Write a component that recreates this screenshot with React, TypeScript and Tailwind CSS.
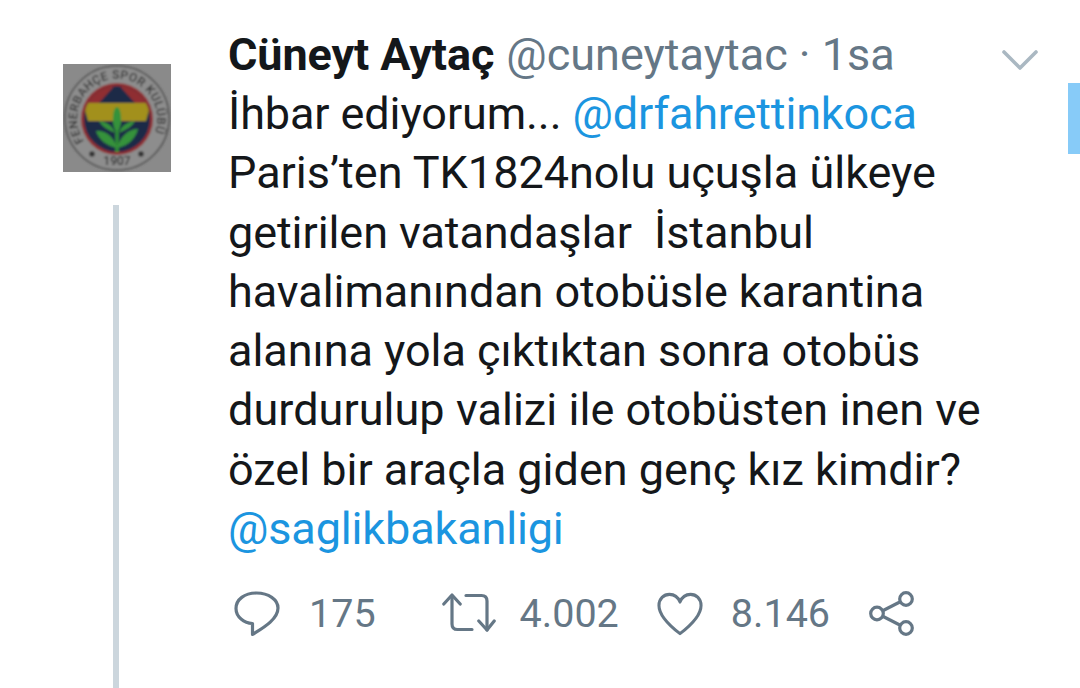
import React from 'react';

const Logo = () => (
  <svg viewBox="0 0 108 108" className="w-[108px] h-[108px] block">
    <defs>
      <filter id="soft" x="-5%" y="-5%" width="110%" height="110%">
        <feGaussianBlur stdDeviation="1" />
      </filter>
      <path id="ring" d="M 21 77 A 40 40 0 1 1 88 76" />
      <clipPath id="inner">
        <circle cx="54" cy="55" r="33" />
      </clipPath>
    </defs>
    <rect width="108" height="108" fill="#8a8a8a" />
    <g filter="url(#soft)">
      <circle cx="54" cy="54" r="52" fill="#8d8d8d" stroke="#505050" strokeWidth="1.6" />
      <circle cx="54" cy="55" r="36" fill="#8f2f33" />
      <g clipPath="url(#inner)">
        <rect x="18" y="18" width="72" height="74" fill="#1c2947" />
        <path d="M54 19 L20 19 L20 39 L36 39 Z" fill="#8f2f33" />
        <path d="M54 19 L88 19 L88 39 L72 39 Z" fill="#8f2f33" />
        <path d="M20 39 H88 L83 57 H25 Z" fill="#a2901c" />
      </g>
      <path d="M54 88 V48" stroke="#2f8a35" strokeWidth="3.6" />
      <ellipse cx="54" cy="55" rx="4.2" ry="12" fill="#35923a" />
      <path d="M54 84 C44 82 36 76 33 67 C43 66 51 73 54 84 Z" fill="#35923a" />
      <path d="M54 84 C64 82 72 76 75 65 C65 65 57 73 54 84 Z" fill="#35923a" />
      <path d="M52 69 C46 66 39 63 36 57 C44 58 50 62 52 69 Z" fill="#35923a" />
      <path d="M56 69 C62 66 69 63 72 57 C64 58 58 62 56 69 Z" fill="#35923a" />
      <text fontFamily="Roboto, sans-serif" fontSize="12" fontWeight="500" fill="#343434" letterSpacing="0.3">
        <textPath href="#ring" startOffset="0%">FENERBAHÇE SPOR KULÜBÜ</textPath>
      </text>
      <text x="54" y="101" textAnchor="middle" fontFamily="Roboto, sans-serif" fontSize="12" fontWeight="500" fill="#343434">1907</text>
      <circle cx="29" cy="90" r="2.8" fill="#333333" />
      <circle cx="78" cy="90" r="2.8" fill="#333333" />
    </g>
  </svg>
);

const Reply = () => (
  <svg viewBox="0 0 46 46" className="w-[46px] h-[46px]" fill="none" stroke="#657786" strokeWidth="3.2" strokeLinejoin="round">
    <path d="M22.5 2 C10.5 2 2 8.5 2 17.5 C2 26 10 32 18.5 32.5 L18.5 43.5 C27 38 44 29 44 17 C44 8.5 34.5 2 22.5 2 Z" />
  </svg>
);

const Retweet = () => (
  <svg viewBox="0 0 54 44" className="w-[54px] h-[44px]" fill="none" stroke="#657786" strokeWidth="3.2" strokeLinecap="round" strokeLinejoin="round">
    <path d="M1.8 12 L10 3 L18.2 12" />
    <path d="M10 4 V32 Q10 37.5 15.5 37.5 H30" />
    <path d="M24 3.5 H39.5 Q45 3.5 45 9 V38" />
    <path d="M36.8 29 L45 38 L52.2 29" />
  </svg>
);

const Heart = () => (
  <svg viewBox="0 0 48 46" className="w-[46px] h-[44px]" fill="none" stroke="#657786" strokeWidth="3.2" strokeLinejoin="round">
    <path d="M24 43.5 C13 35 2 25 2 14 C2 7 7 2.5 13 2.5 C18 2.5 22 5.5 24 10.5 C26 5.5 30 2.5 35 2.5 C41 2.5 46 7 46 14 C46 25 35 35 24 43.5 Z" />
  </svg>
);

const Share = () => (
  <svg viewBox="0 0 46 48" className="w-[46px] h-[48px]" fill="none" stroke="#657786" strokeWidth="3.2">
    <circle cx="8" cy="23.5" r="6.3" />
    <circle cx="37" cy="9" r="6.3" />
    <circle cx="37" cy="38" r="6.3" />
    <path d="M13.7 20.7 L31.3 11.8" />
    <path d="M13.7 26.3 L31.3 35.2" />
  </svg>
);

export default function App() {
  return (
    <div className="relative h-[688px] w-[1080px] overflow-hidden bg-white font-['Roboto',sans-serif] flex">
      <div className="w-[228px] shrink-0 pl-[63px] pt-[64px] flex flex-col">
        <Logo />
        <div className="mt-[33px] ml-[50px] w-[6px] flex-1 bg-[#ccd6dd]" />
      </div>

      <div className="w-[761px] shrink-0 pt-[25px]">
        <div className="flex items-baseline whitespace-nowrap text-[45px] leading-[59px]">
          <span className="font-bold text-[#14171a] tracking-[-0.1px]">Cüneyt Aytaç</span>
          <span className="ml-[12px] text-[#657786]">@cuneytaytac · 1sa</span>
        </div>
        <div className="text-[45px] leading-[59.3px] text-[#14171a] whitespace-nowrap">
          <div className="tracking-[-0.1px]">İhbar ediyorum... <span className="text-[#1b95e0] tracking-[-0.15px]">@drfahrettinkoca</span></div>
          <div>Paris’ten TK1824nolu uçuşla ülkeye</div>
          <div className="whitespace-pre tracking-[-0.08px]">getirilen vatandaşlar  İstanbul</div>
          <div className="tracking-[-0.06px]">havalimanından otobüsle karantina</div>
          <div className="tracking-[-0.04px]">alanına yola çıktıktan sonra otobüs</div>
          <div className="tracking-[0.04px]">durdurulup valizi ile otobüsten inen ve</div>
          <div>özel bir araçla giden genç kız kimdir?</div>
          <div className="text-[#1b95e0] tracking-[-0.15px]">@saglikbakanligi</div>
        </div>
        <div className="mt-[32px] flex items-center text-[39.5px] leading-[48px] text-[#657786]">
          <div className="ml-[6px]"><Reply /></div>
          <span className="ml-[29px]">175</span>
          <div className="ml-[66px]"><Retweet /></div>
          <span className="ml-[24px]">4.002</span>
          <div className="ml-[38px]"><Heart /></div>
          <span className="ml-[28px]">8.146</span>
          <div className="ml-[39px]"><Share /></div>
        </div>
      </div>

      <div className="flex-1 min-w-0 flex flex-col items-end">
        <svg viewBox="0 0 36 22" className="mt-[49px] mr-[42px] w-[36px] h-[22px]" fill="none" stroke="#aab8c2" strokeWidth="3.6" strokeLinecap="round" strokeLinejoin="round">
          <path d="M2 3 L18 19 L34 3" />
        </svg>
        <div className="mt-[12px] w-[12px] h-[71px] bg-[#87cbf8]" />
      </div>
    </div>
  );
}
